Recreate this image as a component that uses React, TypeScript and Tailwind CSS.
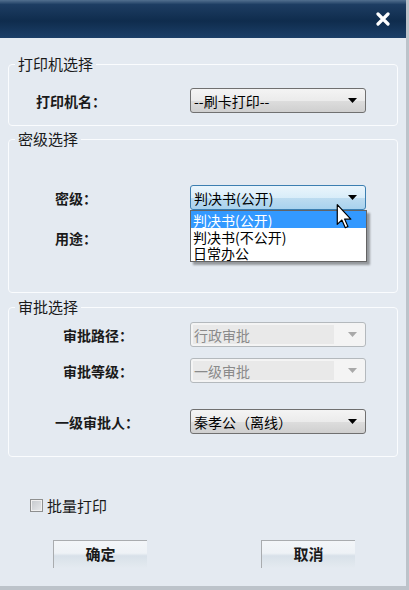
import React from "react";

type Kind = "normal" | "focus" | "disabled";

function Arrow({ color }: { color: string }) {
  return (
    <svg width="9" height="5" viewBox="0 0 9 5" className="shrink-0">
      <path d="M0 0 H9 L4.5 5 Z" fill={color} />
    </svg>
  );
}

function Select({ value, kind = "normal" }: { value: string; kind?: Kind }) {
  if (kind === "disabled") {
    return (
      <div className="w-[176px] h-[25px] flex items-center rounded-[3px] border border-[#b4b9bd] bg-[#f4f4f4] pl-[2px] pr-[8px]">
        <div className="flex-1 h-[19px] flex items-center bg-[#e9e9e9] pl-[1px] text-[14px] leading-none text-[#8a8a8a] mr-[14px]">
          {value}
        </div>
        <Arrow color="#a9a9a9" />
      </div>
    );
  }
  const box =
    kind === "focus"
      ? "border-[#3c7fb1] bg-[linear-gradient(#eaf5fc,#d9edf9_50%,#bedcf0_51%,#a8d2ee)]"
      : "border-[#707070] bg-[linear-gradient(#f4f4f4,#ebebeb_50%,#dddddd_51%,#cfcfcf)]";
  return (
    <div
      className={`w-[176px] h-[25px] flex items-center justify-between rounded-[3px] border ${box} pl-[3px] pr-[8px] text-[14px] leading-none text-black`}
    >
      <span>{value}</span>
      <Arrow color="#000" />
    </div>
  );
}

function Row({ label, pl, children }: { label: string; pl: string; children: React.ReactNode }) {
  return (
    <div className="flex items-center">
      <div className={`w-[181px] ${pl} text-[14px] font-semibold leading-none text-[#1a1a1a]`}>{label}</div>
      {children}
    </div>
  );
}

function Group({ title, className, children }: { title: string; className: string; children: React.ReactNode }) {
  return (
    <fieldset className={`mx-[8px] rounded-[4px] border border-[#fafcfe] ${className}`}>
      <legend className="ml-[6px] px-[3px] text-[15px] leading-[18px] text-[#1a1a1a]">{title}</legend>
      {children}
    </fieldset>
  );
}

function Cursor() {
  return (
    <svg width="17" height="25" viewBox="0 0 12 19" className="absolute left-[336px] top-[204px]">
      <path d="M0.5 0.5 V15.5 L4 12.2 L6.6 18 L8.6 17.1 L6.1 11.5 H10.8 Z" fill="#fff" stroke="#000" strokeWidth="0.9" strokeLinejoin="round" />
    </svg>
  );
}

export default function App() {
  return (
    <div className="relative w-[409px] h-[590px] overflow-hidden bg-[#e4eaf1] border-r-[3px] border-b-[4px] border-[#bcc3ca] font-['Noto_Sans_CJK_SC',sans-serif]">
      {/* title bar */}
      <div className="h-[38px] flex items-center justify-end pr-[16px] bg-[linear-gradient(#52708f,#1d3d62_12%,#0f2c4d_55%,#1b3f68)]">
        <svg width="14" height="14" viewBox="0 0 14 14">
          <path d="M2 2 L12 12 M12 2 L2 12" stroke="#fff" strokeWidth="3.2" strokeLinecap="round" />
        </svg>
      </div>

      <Group title="打印机选择" className="mt-[17px] pt-[15px] pb-[12px]">
        <Row label="打印机名：" pl="pl-[27px]">
          <Select value="--刷卡打印--" />
        </Row>
      </Group>

      <Group title="密级选择" className="mt-[4px] pt-[37px] pb-[42px]">
        <div className="flex flex-col gap-[15px]">
          <Row label="密级：" pl="pl-[46px]">
            <Select value="判决书(公开)" kind="focus" />
          </Row>
          <Row label="用途：" pl="pl-[46px]">
            <div className="w-[176px] h-[25px]" />
          </Row>
        </div>
      </Group>

      <Group title="审批选择" className="mt-[5px] pt-[6px] pb-[22px]">
        <div className="flex flex-col">
          <Row label="审批路径：" pl="pl-[54px]">
            <Select value="行政审批" kind="disabled" />
          </Row>
          <div className="mt-[11px]">
            <Row label="审批等级：" pl="pl-[54px]">
              <Select value="一级审批" kind="disabled" />
            </Row>
          </div>
          <div className="mt-[26px]">
            <Row label="一级审批人：" pl="pl-[46px]">
              <Select value="秦孝公（离线）" />
            </Row>
          </div>
        </div>
      </Group>

      <label className="mt-[39px] ml-[30px] flex items-center gap-[4px] h-[18px] w-max">
        <span className="w-[13px] h-[13px] border border-[#8e8f8f] bg-[linear-gradient(135deg,#c4c8cc,#e8eaec)] shadow-[inset_0_0_0_1px_#f0f0f0]" />
        <span className="text-[15px] leading-none text-[#1a1a1a]">批量打印</span>
      </label>

      <div className="mt-[26px] flex">
        <button className="ml-[53px] w-[94px] h-[28px] border-t border-l border-[#a9acaf] bg-[linear-gradient(#f3f6f9,#eef2f6_45%,#d8e1e9_55%,#e4eaf0)] text-[15px] font-semibold text-[#1a1a1a]">
          确定
        </button>
        <button className="ml-[114px] w-[94px] h-[28px] border-t border-l border-[#a9acaf] bg-[linear-gradient(#f3f6f9,#eef2f6_45%,#d8e1e9_55%,#e4eaf0)] text-[15px] font-semibold text-[#1a1a1a]">
          取消
        </button>
      </div>

      {/* open dropdown list */}
      <div className="absolute left-[190px] top-[210px] w-[177px] border border-[#646464] bg-white shadow-[3px_3px_2px_rgba(0,0,0,0.35)] text-[14px]">
        <div className="h-[17px] flex items-center bg-[#3399ff] text-white pl-[2px] leading-none">判决书(公开)</div>
        <div className="h-[17px] flex items-center text-black pl-[2px] leading-none">判决书(不公开)</div>
        <div className="h-[16px] flex items-center text-black pl-[2px] leading-none">日常办公</div>
      </div>
      <Cursor />
    </div>
  );
}
